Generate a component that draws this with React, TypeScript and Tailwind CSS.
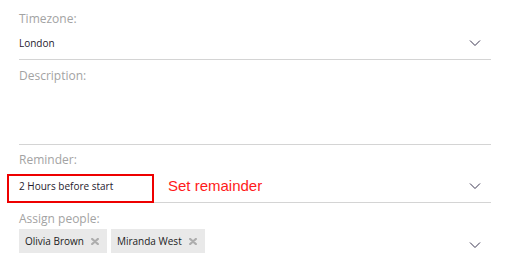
import React from "react";

const font = { fontFamily: '"Open Sans", "Noto Sans", sans-serif' };

function Chevron() {
  return (
    <svg width="12" height="8" viewBox="0 0 12 8" className="shrink-0">
      <path d="M1 1.5 L6 6.5 L11 1.5" fill="none" stroke="#3a3550" strokeWidth="1" />
    </svg>
  );
}

function Chip({ name }: { name: string }) {
  return (
    <div className="flex h-6 items-center bg-[#e9e9e9] pl-[6px] pr-[8px]">
      <span className="text-[10px] leading-4 text-[#222]">{name}</span>
      <svg width="8" height="7" viewBox="0 0 8 7" className="ml-[7px]">
        <path d="M1.2 1 L6.8 6 M6.8 1 L1.2 6" stroke="#adadad" strokeWidth="2.3" strokeLinecap="round" />
      </svg>
    </div>
  );
}

export default function App() {
  return (
    <div className="h-[260px] w-[514px] overflow-hidden bg-white" style={font}>
      <div className="ml-[19px] w-[472px]">
        {/* Timezone */}
        <section className="border-b border-[#d4d4d4] pt-[10px] pb-[8px]">
          <div className="text-[12px] leading-[18px] text-[#a3a3a3]">Timezone:</div>
          <div className="mt-[7px] flex h-4 items-center justify-between pr-[10px]">
            <span className="text-[10px] leading-4 text-[#1f1a2e]">London</span>
            <Chevron />
          </div>
        </section>

        {/* Description */}
        <section className="h-[85px] border-b border-[#d4d4d4] pt-[7px]">
          <div className="text-[12px] leading-[18px] text-[#a3a3a3]">Description:</div>
        </section>

        {/* Reminder */}
        <section className="relative h-[58px] border-b border-[#d4d4d4] pt-[6px]">
          <div className="text-[12px] leading-[18px] text-[#a3a3a3]">Reminder:</div>
          <div className="mt-[9px] flex h-4 items-center justify-between pr-[10px]">
            <span className="text-[10px] leading-4 text-[#1f1a2e]">2 Hours before start</span>
            <Chevron />
          </div>
          {/* annotation */}
          <div className="absolute left-[-12px] top-[29px] h-[29px] w-[147px] border-2 border-[#ee0000]" />
          <span
            className="absolute left-[149px] top-[32px] text-[15px] leading-[18px] text-[#ff1a1a]"
            style={{ fontFamily: '"Liberation Sans", Arial, sans-serif' }}
          >
            Set remainder
          </span>
        </section>

        {/* Assign people */}
        <section className="pt-[7px]">
          <div className="text-[12px] leading-[18px] text-[#a3a3a3]">Assign people:</div>
          <div className="mt-[1px] flex items-start justify-between pr-[10px]">
            <div className="flex gap-1">
              <Chip name="Olivia Brown" />
              <Chip name="Miranda West" />
            </div>
            <div className="mt-[12px]">
              <Chevron />
            </div>
          </div>
        </section>
      </div>
    </div>
  );
}
